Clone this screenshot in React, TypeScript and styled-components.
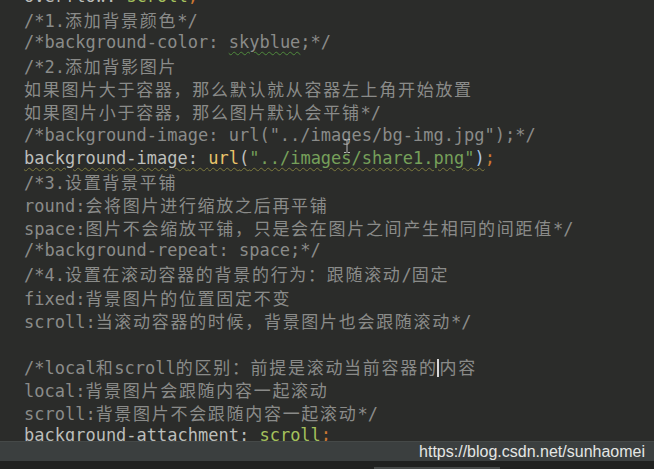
import React from "react";
import styled, { createGlobalStyle, css } from "styled-components";

const Global = createGlobalStyle`
  html, body { margin: 0; padding: 0; background: #2b2c2a; }
  body { width: 654px; height: 469px; overflow: hidden; }
  #root { width: 654px; height: 469px; }
`;

type Kind = "comment" | "prop" | "val" | "fn" | "str" | "paren" | "parenMatch" | "semi" | "plain";
type Tok = { t: string; k: Kind; u?: "spell" | "warn"; caret?: boolean };

const C = (t: string): Tok => ({ t, k: "comment" });

const lines: Tok[][] = [
  [{ t: "overflow", k: "prop" }, { t: ": ", k: "plain" }, { t: "scroll", k: "val" }, { t: ";", k: "semi" }],
  [C("/*1.添加背景颜色*/")],
  [C("/*background-color: "), { t: "skyblue", k: "comment", u: "spell" }, C(";*/")],
  [C("/*2.添加背影图片")],
  [C("如果图片大于容器，那么默认就从容器左上角开始放置")],
  [C("如果图片小于容器，那么图片默认会平铺*/")],
  [C('/*background-image: url("../images/bg-img.jpg");*/')],
  [
    { t: "background-image", k: "prop", u: "warn" },
    { t: ": ", k: "plain", u: "warn" },
    { t: "url", k: "fn", u: "warn" },
    { t: "(", k: "paren", u: "warn" },
    { t: '"../images/share1.png"', k: "str", u: "warn" },
    { t: ")", k: "parenMatch", u: "warn" },
    { t: ";", k: "semi" },
  ],
  [C("/*3.设置背景平铺")],
  [C("round:会将图片进行缩放之后再平铺")],
  [C("space:图片不会缩放平铺，只是会在图片之间产生相同的间距值*/")],
  [C("/*background-repeat: space;*/")],
  [C("/*4.设置在滚动容器的背景的行为：跟随滚动/固定")],
  [C("fixed:背景图片的位置固定不变")],
  [C("scroll:当滚动容器的时候，背景图片也会跟随滚动*/")],
  [],
  [C("/*local和scroll的区别：前提是滚动当前容器的"), { t: "", k: "comment", caret: true }, C("内容")],
  [C("local:背景图片会跟随内容一起滚动")],
  [C("scroll:背景图片不会跟随内容一起滚动*/")],
  [{ t: "background-attachment", k: "prop" }, { t: ": ", k: "plain" }, { t: "scroll", k: "val" }, { t: ";", k: "semi" }],
];

const colors: Record<Kind, string> = {
  comment: "#8a8b89",
  prop: "#bcbebb",
  plain: "#bcbebb",
  val: "#a5c25c",
  fn: "#e8c46a",
  str: "#76a05a",
  paren: "#bcbebb",
  parenMatch: "#a9c6e8",
  semi: "#cc7832",
};

const Screen = styled.div`
  width: 654px;
  height: 469px;
  display: flex;
  flex-direction: column;
  background: #2b2c2a;
`;

const Editor = styled.div`
  position: relative;
  height: 441px;
  overflow: hidden;
  flex: none;
`;

const Code = styled.div`
  margin-top: -15.3px;
  padding-left: 24px;
  font-family: "DejaVu Sans Mono", "Noto Sans CJK SC", monospace;
  font-size: 17px;
  letter-spacing: 0;
`;

const Line = styled.div`
  height: 23.15px;
  line-height: 23.15px;
  white-space: pre;
`;

const Tk = styled.span<{ $k: Kind; $u?: "spell" | "warn" }>`
  color: ${(p) => colors[p.$k]};
  ${(p) =>
    p.$u === "spell" &&
    css`
      text-decoration: underline wavy #4f8a3c;
      text-decoration-thickness: 1px;
      text-underline-offset: 3px;
    `}
  ${(p) =>
    p.$u === "warn" &&
    css`
      text-decoration: underline wavy #7d7a3c;
      text-decoration-thickness: 1px;
      text-underline-offset: 3px;
    `}
`;

const Han = styled.span`
  font-family: "Noto Sans CJK SC", sans-serif;
  font-size: 17px;
  letter-spacing: 1.7px;
`;

const Caret = styled.span`
  display: inline-block;
  width: 2px;
  height: 18px;
  margin: 0 1px 0 -1px;
  vertical-align: -3px;
  background: #d8d8d8;
`;

const IBeam = styled.svg`
  position: absolute;
  left: 342px;
  top: 138px;
`;

const StatusBar = styled.div`
  height: 20px;
  flex: none;
  background: #3b3f3f;
  border-top: 1px solid #454948;
  box-sizing: border-box;
  display: flex;
  align-items: center;
  justify-content: flex-end;
  padding-right: 9px;
`;

const Watermark = styled.span`
  font-family: "Liberation Sans", Arial, sans-serif;
  font-size: 16px;
  color: #e4e6e4;
  line-height: 1;
`;

const Bottom = styled.div`
  flex: 1;
  background: #202120;
  display: flex;
  align-items: flex-end;
  padding-left: 374px;
`;

const Tab = styled.div`
  width: 126px;
  height: 2px;
  background: #474a49;
`;

const cjk = /([\u3000-\u303f\u4e00-\u9fff\uff00-\uffef]+)/;

function renderText(t: string) {
  return t.split(cjk).map((part, i) =>
    i % 2 === 1 ? <Han key={i}>{part}</Han> : <React.Fragment key={i}>{part}</React.Fragment>
  );
}

export default function App() {
  return (
    <>
      <Global />
      <Screen>
        <Editor>
          <Code>
            {lines.map((ln, i) => (
              <Line key={i}>
                {ln.length === 0 ? " " : null}
                {ln.map((tok, j) =>
                  tok.caret ? (
                    <Caret key={j} />
                  ) : (
                    <Tk key={j} $k={tok.k} $u={tok.u}>
                      {renderText(tok.t)}
                    </Tk>
                  )
                )}
              </Line>
            ))}
          </Code>
          <IBeam width="10" height="16" viewBox="0 0 10 16">
            <path d="M2 1.5h2.5M5.5 1.5H8M5 2v12M2 14.5h2.5M5.5 14.5H8" stroke="#b8b8b8" strokeWidth="1" fill="none" />
          </IBeam>
        </Editor>
        <StatusBar>
          <Watermark>https://blog.csdn.net/sunhaomei</Watermark>
        </StatusBar>
        <Bottom>
          <Tab />
        </Bottom>
      </Screen>
    </>
  );
}
